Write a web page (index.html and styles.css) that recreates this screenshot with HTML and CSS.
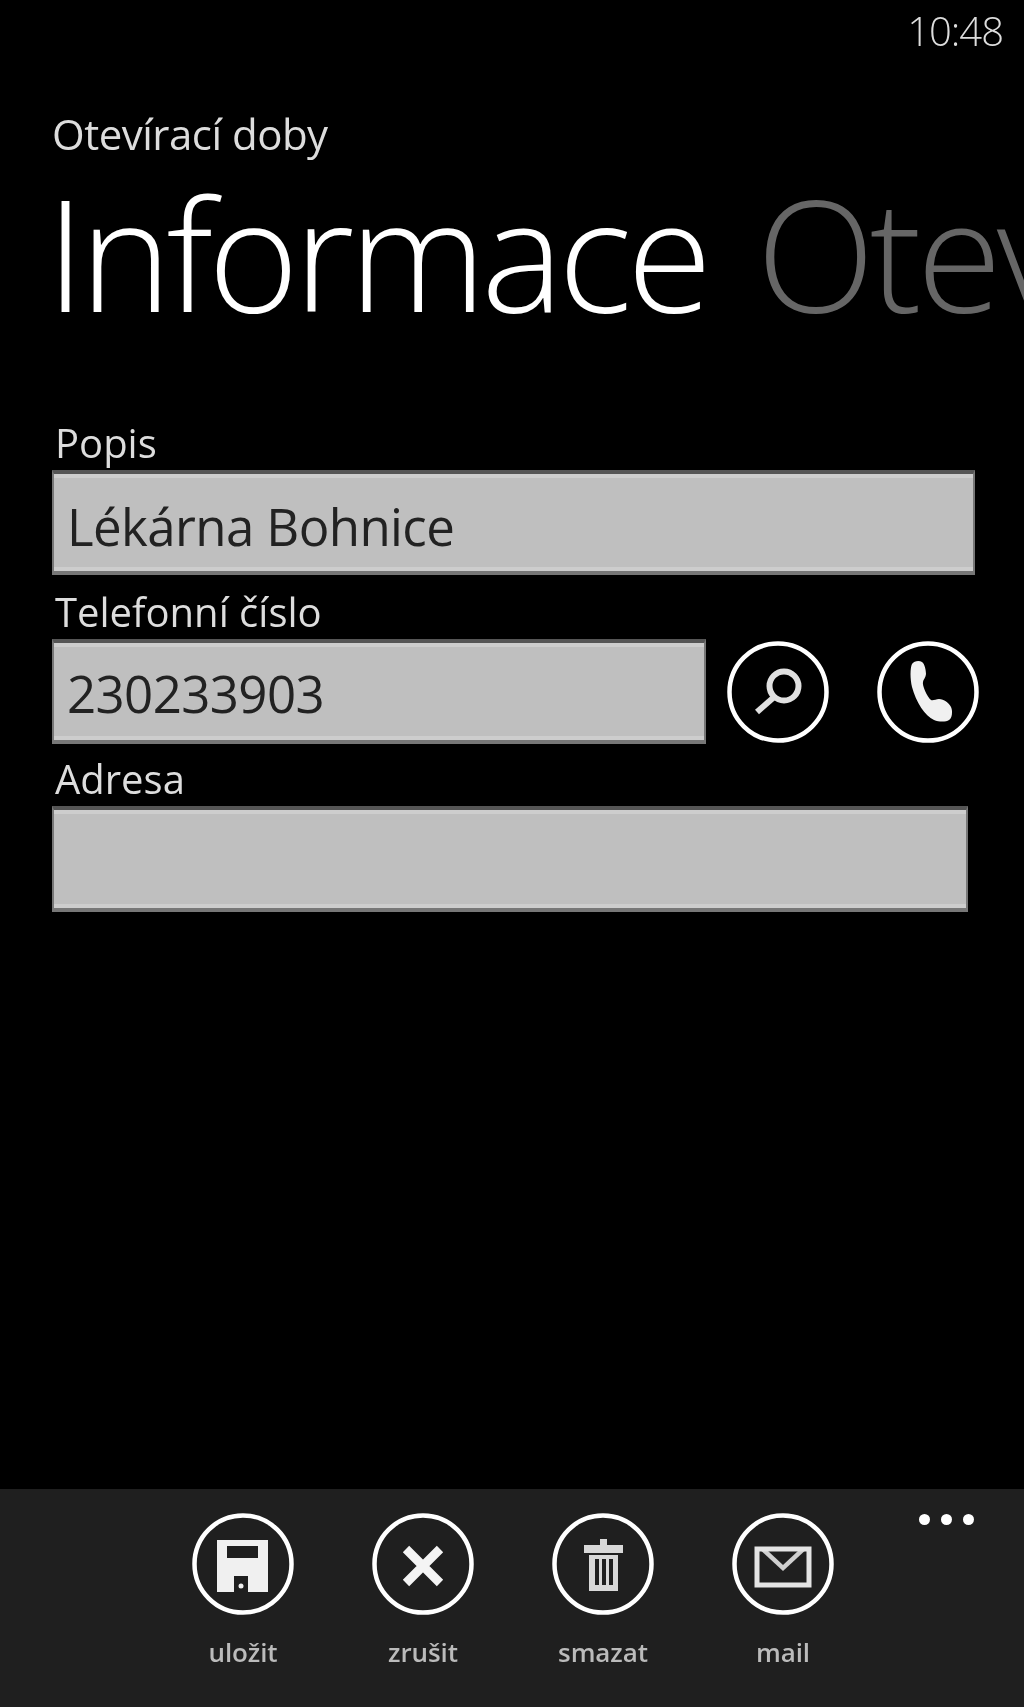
FILE: index.html
```html
<!DOCTYPE html>
<html lang="cs">
<head>
<meta charset="utf-8">
<title>Informace</title>
<link rel="stylesheet" href="styles.css">
</head>
<body>
<div class="phone">
  <main class="content">
    <div class="status"><span class="time">10:48</span></div>
    <div class="app-title">Otevírací doby</div>
    <div class="pivot"><span class="pivot-active">Informace</span> <span class="pivot-next">Otevírací doby</span></div>
    <form class="form">
      <div class="label">Popis</div>
      <div class="field field-wide"><span>Lékárna Bohnice</span></div>
      <div class="label">Telefonní číslo</div>
      <div class="phone-row">
        <div class="field field-phone"><span>230233903</span></div>
        <svg class="round" viewBox="0 0 104 104"><circle class="ring" cx="52" cy="52" r="48.5"/><circle class="line" cx="58" cy="46" r="14.5"/><path class="line" d="M47 58 31 72"/></svg>
        <svg class="round round-call" viewBox="0 0 104 104"><circle class="ring" cx="52" cy="52" r="48.5"/><path class="fill" d="M36 24c2-3 7-4 10-2 3 2 4 9 4 12 0 3-3 6-3 8-1 3 4 15 8 18 2 1 5-1 8-1 5 0 10 4 12 8 2 4 1 12-2 13-3 2-10 2-15 0-9-4-18-18-22-33-2-8-2-19 0-23Z"/></svg>
      </div>
      <div class="label">Adresa</div>
      <div class="field field-address"></div>
    </form>
  </main>
  <footer class="appbar">
    <div class="actions">
      <div class="action">
        <svg class="round" viewBox="0 0 104 104"><circle class="ring" cx="52" cy="52" r="48.5"/><path class="fill" fill-rule="evenodd" d="M26 28h51v52H26ZM36 34v12h31V34Z"/><path class="cut" d="M43 64h14v17H43Z"/><circle class="fill" cx="50" cy="74" r="2.5"/></svg>
        <span class="action-label">uložit</span>
      </div>
      <div class="action">
        <svg class="round" viewBox="0 0 104 104"><circle class="ring" cx="52" cy="52" r="48.5"/><path class="cross" d="M35 37 69 71M69 37 35 71"/></svg>
        <span class="action-label">zrušit</span>
      </div>
      <div class="action">
        <svg class="round" viewBox="0 0 104 104"><circle class="ring" cx="52" cy="52" r="48.5"/><path class="fill-dim" fill-rule="evenodd" d="M49 27h7v6h16v8H33v-8h16ZM38 43h29v36H38ZM44 47v26h4V47ZM51 47v26h4V47ZM58 47v26h4V47Z"/></svg>
        <span class="action-label">smazat</span>
      </div>
      <div class="action">
        <svg class="round" viewBox="0 0 104 104"><circle class="ring" cx="52" cy="52" r="48.5"/><path class="flap" d="M26 35H78L52 59Z"/><path class="cut" d="M36 38H68L52 53Z"/><rect class="line-thick" x="26" y="37" width="52" height="36"/></svg>
        <span class="action-label">mail</span>
      </div>
    </div>
    <div class="more"><i></i><i></i><i></i></div>
  </footer>
</div>
</body>
</html>
```
FILE: styles.css
```css
* { box-sizing: border-box; }
html, body { margin: 0; padding: 0; background: #000; }
.phone {
  width: 1024px; height: 1707px; overflow: hidden;
  display: flex; flex-direction: column;
  background: #000; color: #fff;
  font-family: "Open Sans", "Noto Sans", sans-serif;
  filter: blur(.6px);
}
.content { flex: 1; padding: 0 0 0 52px; min-height: 0; }
.status { display: flex; justify-content: flex-end; height: 111px; padding: 9px 21px 0 0; }
.time { font-size: 40px; line-height: 44px; font-weight: 300; color: #ddd; letter-spacing: -1px; }
.app-title { font-size: 42px; line-height: 46px; font-weight: 400; color: #ddd; letter-spacing: -.5px; }
.pivot { height: 267px; font-size: 155px; line-height: 190px; font-weight: 300; white-space: nowrap; overflow: hidden; letter-spacing: -5px; margin-left: -6px; }
.pivot-active { color: #fff; }
.pivot-next { color: #666; margin-left: 14px; }
.form { display: flex; flex-direction: column; }
.label { font-size: 40px; line-height: 38px; color: #ddd; padding-left: 3px; height: 46px; }
.field {
  height: 105px; background: #bfbfbf; color: #222;
  border-top: 4px solid #555; border-bottom: 4px solid #777;
  border-left: 2px solid #777; border-right: 2px solid #777;
  box-shadow: inset 0 4px 0 #cdcdcd, inset 0 -4px 0 #cdcdcd;
  font-size: 51px; line-height: 105px; padding: 0 0 0 13px; letter-spacing: -.6px;
}
.field-wide { width: 923px; margin-bottom: 18px; }
.field-phone { width: 654px; flex: none; line-height: 101px; }
.field-address { width: 916px; height: 106px; }
.phone-row { display: flex; align-items: center; height: 105px; margin-bottom: 16px; }
.round { width: 104px; height: 104px; flex: none; display: block; }
.phone-row .round { margin-left: 20px; }
.phone-row .round-call { margin-left: 46px; }
.ring { fill: none; stroke: #fff; stroke-width: 4.5; }
.line { fill: none; stroke: #e0e0e0; stroke-width: 6; }
.line-thick { fill: none; stroke: #e4e4e4; stroke-width: 5; }
.fill { fill: #f0f0f0; }
.fill-dim { fill: #d8d8d8; }
.cut { fill: #1f1f1f; }
.cross { fill: none; stroke: #f4f4f4; stroke-width: 9; }
.flap { fill: #cfcfcf; }
.appbar { height: 218px; flex: none; background: #1f1f1f; position: relative; padding-top: 23px; }
.actions { display: flex; padding-left: 191px; gap: 76px; }
.action { width: 104px; display: flex; flex-direction: column; align-items: center; gap: 20px; }
.action-label { font-size: 26px; line-height: 32px; color: #bbb; white-space: nowrap; font-weight: 600; letter-spacing: -.1px; }
.more { position: absolute; top: 25px; left: 919px; display: flex; gap: 11px; }
.more i { width: 11px; height: 11px; border-radius: 50%; background: #fff; display: block; }
```
